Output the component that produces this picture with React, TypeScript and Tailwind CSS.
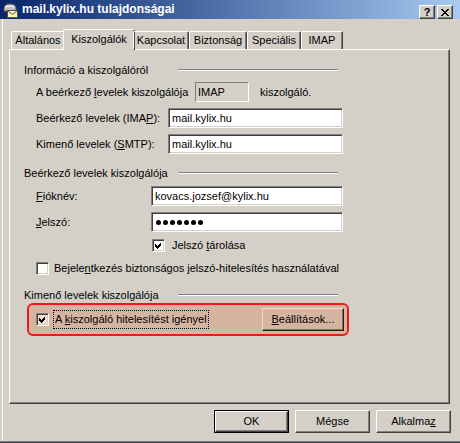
import React from "react";

const sunken =
  "border border-t-[#808080] border-l-[#808080] border-r-white border-b-white shadow-[inset_1px_1px_0_#404040,inset_-1px_-1px_0_#d4d0c8]";
const raised =
  "border border-t-white border-l-white border-r-[#404040] border-b-[#404040] shadow-[inset_-1px_-1px_0_#808080]";

function Check({ checked, tint }: { checked?: boolean; tint?: boolean }) {
  return (
    <div
      className={`w-[13px] h-[13px] shrink-0 ${sunken} ${tint ? "bg-[#f6dccd]" : "bg-white"} flex`}
    >
      {checked && (
        <svg width="11" height="11" viewBox="0 0 11 11" shapeRendering="crispEdges">
          <polygon points="2,4 4,6 8,2 8,5 4,9 2,7" fill="#000" />
        </svg>
      )}
    </div>
  );
}

function GroupHeader({ title }: { title: string }) {
  return (
    <div className="flex items-center h-[14px] pl-[14px]">
      <div className="w-[154px] leading-[14px]">{title}</div>
      <div className="w-[160px] h-[2px] border-t border-t-[#808080] border-b border-b-white" />
    </div>
  );
}

function Input({ value, w }: { value?: React.ReactNode; w: string }) {
  return (
    <div className={`${w} h-[20px] ${sunken} bg-white flex items-center pl-[3px]`}>{value}</div>
  );
}

function Btn({ children, def }: { children: React.ReactNode; def?: boolean }) {
  if (def) {
    return (
      <div className="w-[75px] h-[23px] border border-black flex">
        <div className={`flex-1 ${raised} flex items-center justify-center`}>{children}</div>
      </div>
    );
  }
  return (
    <div className={`w-[75px] h-[23px] ${raised} flex items-center justify-center`}>{children}</div>
  );
}

export default function App() {
  const tabs = ["Általános", "Kiszolgálók", "Kapcsolat", "Biztonság", "Speciális", "IMAP"];
  const widths = ["w-[54px]", "w-[72px]", "w-[56px]", "w-[58px]", "w-[54px]", "w-[42px]"];
  return (
    <div
      className="w-[460px] h-[443px] bg-[#d4d0c8] flex flex-col text-[11px] text-black overflow-hidden"
      style={{ fontFamily: '"Liberation Sans", Arial, sans-serif' }}
    >
      {/* Title bar */}
      <div className="h-[19px] shrink-0 bg-gradient-to-r from-[#0a246a] to-[#a6caf0] flex items-center">
        <svg className="ml-[3px] shrink-0" width="16" height="16" viewBox="0 0 16 16">
          <path d="M1 7 Q1 2 7 2 Q13 2 13 7 L13 9 L1 9 Z" fill="#c0c0c0" stroke="#606060" strokeWidth="1" />
          <path d="M2 5 Q7 3 12 5" fill="none" stroke="#ffffff" strokeWidth="1" />
          <rect x="4.5" y="8.5" width="10" height="7" fill="#fff4b0" stroke="#505050" strokeWidth="1" />
          <path d="M4.5 8.5 L9.5 12.5 L14.5 8.5" fill="none" stroke="#505050" strokeWidth="1" />
        </svg>
        <div className="ml-[3px] text-white font-bold text-[12px] leading-[19px]">
          mail.kylix.hu tulajdonságai
        </div>
        <div className="flex-1" />
        <div className="flex items-center mr-[7px] mt-[5px] gap-[2px]">
          <div className={`w-[16px] h-[14px] bg-[#d4d0c8] ${raised} flex items-center justify-center font-bold text-[11px] leading-none`}>
            ?
          </div>
          <div className={`w-[16px] h-[14px] bg-[#d4d0c8] ${raised} flex items-center justify-center`}>
            <svg width="8" height="7" viewBox="0 0 8 7" shapeRendering="crispEdges">
              <path d="M0 0h2v1h1v1h2V1h1V0h2v1H7v1H6v1H5v1h1v1h1v1h1v1H6V6H5V5H3v1H2v1H0V6h1V5h1V4h1V3H2V2H1V1H0z" fill="#000" />
            </svg>
          </div>
        </div>
      </div>

      {/* Body */}
      <div className="flex-1 ml-[2px] border-l border-l-white flex flex-col">
        {/* Tabs */}
        <div className="mt-[10px] pl-[8px] h-[20px] flex items-end relative z-10">
          {tabs.map((t, i) =>
            i === 1 ? (
              <div
                key={t}
                className={`${widths[i]} -mx-[2px] h-[21px] -mb-px bg-[#d4d0c8] border-t border-l border-t-white border-l-white border-r border-r-[#404040] shadow-[inset_-1px_0_0_#808080] rounded-tl-[2px] rounded-tr-[2px] flex items-center justify-center leading-none pb-[2px]`}
              >
                {t}
              </div>
            ) : (
              <div
                key={t}
                className={`${widths[i]} h-[18px] border-t border-l border-t-white border-l-white border-r border-r-[#404040] shadow-[inset_-1px_0_0_#808080] rounded-tl-[2px] rounded-tr-[2px] flex items-center justify-center leading-none`}
              >
                {t}
              </div>
            )
          )}
        </div>

        {/* Panel */}
        <div className="ml-[6px] w-[441px] h-[355px] border-t border-l border-t-white border-l-white border-r border-b border-r-[#404040] border-b-[#404040] shadow-[inset_-1px_-1px_0_#808080] flex flex-col">
          <div className="mt-[13px]">
            <GroupHeader title="Információ a kiszolgálóról" />
          </div>
          <div className="mt-[5px] h-[20px] flex items-center pl-[26px]">
            <div className="w-[159px]">
              A beérkező <u>l</u>evelek kiszolgálója
            </div>
            <div className="w-[54px] h-[20px] border border-t-[#808080] border-l-[#808080] border-r-white border-b-white flex items-center pl-[2px]">
              IMAP
            </div>
            <div className="ml-[11px]">kiszolgáló.</div>
          </div>
          <div className="mt-[6px] h-[20px] flex items-center pl-[26px]">
            <div className="w-[132px]">
              Beérkező levelek (IMA<u>P</u>):
            </div>
            <Input w="w-[175px]" value="mail.kylix.hu" />
          </div>
          <div className="mt-[6px] h-[20px] flex items-center pl-[26px]">
            <div className="w-[132px]">
              Kimenő levelek (<u>S</u>MTP):
            </div>
            <Input w="w-[175px]" value="mail.kylix.hu" />
          </div>

          <div className="mt-[12px]">
            <GroupHeader title="Beérkező levelek kiszolgálója" />
          </div>
          <div className="mt-[6px] h-[20px] flex items-center pl-[26px]">
            <div className="w-[115px]">
              <u>F</u>ióknév:
            </div>
            <Input w="w-[192px]" value="kovacs.jozsef@kylix.hu" />
          </div>
          <div className="mt-[6px] h-[20px] flex items-center pl-[26px]">
            <div className="w-[115px]">
              <u>J</u>elszó:
            </div>
            <Input
              w="w-[192px]"
              value={
                <div className="flex gap-[2px] ml-[1px]">
                  {[0, 1, 2, 3, 4, 5, 6].map((k) => (
                    <div key={k} className="w-[5px] h-[5px] rounded-full bg-black" />
                  ))}
                </div>
              }
            />
          </div>
          <div className="mt-[6px] h-[14px] flex items-center pl-[142px]">
            <Check checked />
            <div className="ml-[7px]">
              Jelszó <u>t</u>árolása
            </div>
          </div>
          <div className="mt-[9px] h-[14px] flex items-center pl-[26px]">
            <Check />
            <div className="ml-[5px]">
              Bejele<u>n</u>tkezés biztonságos jelszó-hitelesítés használatával
            </div>
          </div>

          <div className="mt-[13px]">
            <GroupHeader title="Kimenő levelek kiszolgálója" />
          </div>
          <div className="mt-[1px] ml-[17px] w-[322px] h-[33px] border-2 border-[#f01818] rounded-[6px] bg-[#d5b5a1] flex items-center justify-between pl-[7px] pr-[3px]">
            <div className="flex items-center">
              <Check checked tint />
              <div className="ml-[4px] border border-dotted border-black px-[1px] h-[19px] flex items-center">
                <span>
                  A <u>k</u>iszolgáló hitelesítést igényel
                </span>
              </div>
            </div>
            <div className="w-[82px] h-[23px] border border-t-[#f6dccd] border-l-[#f6dccd] border-r-[#36190a] border-b-[#36190a] shadow-[inset_-1px_-1px_0_#8c6a5a] flex items-center justify-center">
              <span>
                <u>B</u>eállítások...
              </span>
            </div>
          </div>
        </div>

        {/* Buttons */}
        <div className="mt-[6px] ml-[211px] flex gap-[6px]">
          <Btn def>OK</Btn>
          <Btn>Mégse</Btn>
          <Btn>
            <span>
              Alkalma<u>z</u>
            </span>
          </Btn>
        </div>
      </div>
      <div className="h-px bg-[#808080] shrink-0" />
      <div className="h-px bg-[#404040] shrink-0" />
    </div>
  );
}
